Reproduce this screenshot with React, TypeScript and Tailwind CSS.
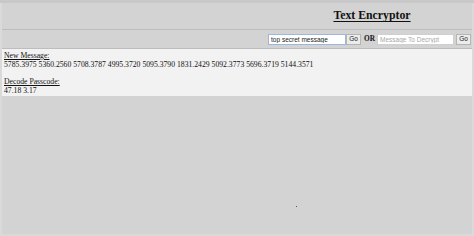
import React from "react";

export default function App() {
  return (
    <div className="relative w-[474px] h-[236px] overflow-hidden bg-[#d3d3d3] font-['Liberation_Serif',serif] text-[#111]">
      <div className="h-[3px] bg-[#c8c8c8]" />
      <header className="flex h-[26px] items-center">
        <div className="w-[270px]" />
        <div className="flex flex-1 justify-center">
          <h1 className="text-[11.8px] font-bold leading-none underline underline-offset-[2px]">Text Encryptor</h1>
        </div>
      </header>
      <div className="h-px bg-[#bdbdbd]" />
      <div className="flex h-[18px] items-center justify-end pr-[3px]">
        <input
          defaultValue="top secret message"
          className="h-[11px] w-[78px] border border-[#9db7df] bg-white px-[2px] font-['Liberation_Sans',sans-serif] text-[6.5px] leading-none text-[#222] outline-none"
        />
        <button className="h-[11px] w-[15px] border border-[#b5b5b5] bg-[#ececec] font-['Liberation_Sans',sans-serif] text-[6.5px] leading-none text-[#222]">
          Go
        </button>
        <span className="ml-[3px] mr-[2px] text-[7.3px] font-bold leading-none">OR</span>
        <input
          placeholder="Message To Decrypt"
          className="h-[11px] w-[77px] border border-[#cfcfcf] bg-white px-[2px] font-['Liberation_Sans',sans-serif] text-[6.5px] leading-none text-[#222] outline-none placeholder:text-[#a8a8a8]"
        />
        <button className="ml-[2px] h-[11px] w-[15px] border border-[#b5b5b5] bg-[#ececec] font-['Liberation_Sans',sans-serif] text-[6.5px] leading-none text-[#222]">
          Go
        </button>
      </div>
      <div className="h-px bg-[#bdbdbd]" />
      <div className="mx-[2px] h-[47px] bg-[#f2f2f2] px-[2px] pt-[3px] text-[7.7px] leading-[8.8px]">
        <div className="underline">New Message:</div>
        <div>5785.3975 5360.2560 5708.3787 4995.3720 5095.3790 1831.2429 5092.3773 5696.3719 5144.3571</div>
        <div className="h-[8.8px]" />
        <div className="underline">Decode Passcode:</div>
        <div>47.18 3.17</div>
      </div>
      <div className="absolute left-[296px] top-[206px] h-[1px] w-[1px] bg-[#555]" />
      <div className="absolute left-0 top-[3px] bottom-0 w-[2px] bg-[#dadada]" />
      <div className="absolute right-0 top-[3px] bottom-0 w-[2px] bg-[#dadada]" />
      <div className="absolute bottom-0 left-0 right-0 h-[2px] bg-[#dadada]" />
    </div>
  );
}
